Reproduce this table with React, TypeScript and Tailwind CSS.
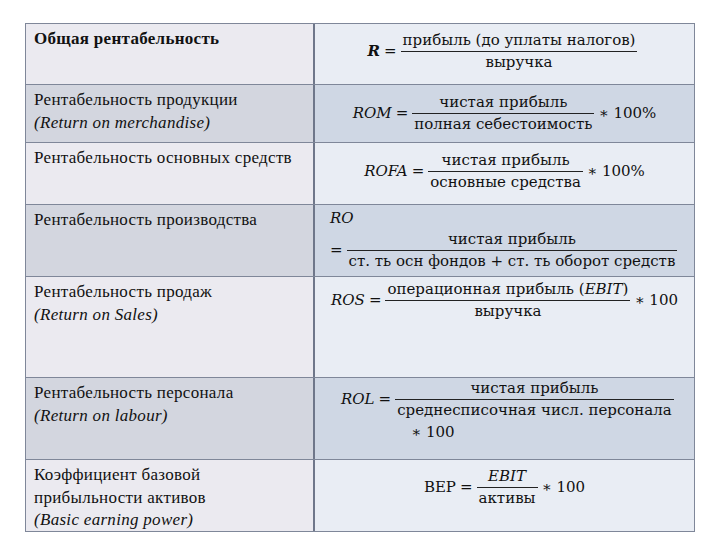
import React from "react";

function Frac({ num, den }: { num: React.ReactNode; den: React.ReactNode }) {
  return (
    <span className="mx-[4px] inline-flex flex-col items-center">
      <span className="px-[2px] leading-[21px]">{num}</span>
      <span className="h-px w-full bg-[#222]" />
      <span className="px-[2px] leading-[21px]">{den}</span>
    </span>
  );
}

function V({ children, b }: { children: React.ReactNode; b?: boolean }) {
  return <i className={b ? "font-bold" : ""}>{children}</i>;
}

function LeftCell({ children, dark, h }: { children: React.ReactNode; dark?: boolean; h: string }) {
  return (
    <div
      className={`${h} w-[289px] shrink-0 border-r-2 border-[#6f778a] px-[8px] pt-[4px] font-['Liberation_Serif',serif] text-[17px] leading-[22.5px] tracking-[0.3px] text-[#111] ${
        dark ? "bg-[#d3d6df]" : "bg-[#ebeaf0]"
      }`}
    >
      {children}
    </div>
  );
}

const mathCls = "font-['DejaVu_Serif',serif] text-[15px] text-[#111]";

export default function App() {
  const rowBorder = "border-b border-[#7f8799]";
  return (
    <div className="h-[540px] w-[720px] bg-white pl-[25px] pt-[23px]">
      <div className="w-[670px] border border-[#7f8799] text-[#111]">
        {/* Row 1 */}
        <div className={`flex ${rowBorder}`}>
          <LeftCell h="h-[60px]">
            <b>Общая рентабельность</b>
          </LeftCell>
          <div className={`flex flex-1 items-center justify-center bg-[#e9edf4] pb-[6px] ${mathCls}`}>
            <V b>R</V>
            <span className="ml-[4px]">=</span>
            <Frac num="прибыль (до уплаты налогов)" den="выручка" />
          </div>
        </div>
        {/* Row 2 */}
        <div className={`flex ${rowBorder}`}>
          <LeftCell h="h-[57px]" dark>
            Рентабельность продукции
            <br />
            <i>(Return on merchandise)</i>
          </LeftCell>
          <div className={`flex flex-1 items-center justify-center bg-[#cfd7e4] ${mathCls}`}>
            <V>ROM</V>
            <span className="ml-[4px]">=</span>
            <Frac num="чистая прибыль" den="полная себестоимость" />
            <span>∗ 100%</span>
          </div>
        </div>
        {/* Row 3 */}
        <div className={`flex ${rowBorder}`}>
          <LeftCell h="h-[61px]">Рентабельность основных средств</LeftCell>
          <div className={`flex flex-1 items-center justify-center bg-[#e9edf4] pb-[4px] ${mathCls}`}>
            <V>ROFA</V>
            <span className="ml-[4px]">=</span>
            <Frac num="чистая прибыль" den="основные средства" />
            <span>∗ 100%</span>
          </div>
        </div>
        {/* Row 4 */}
        <div className={`flex ${rowBorder}`}>
          <LeftCell h="h-[71px]" dark>
            Рентабельность производства
          </LeftCell>
          <div className={`flex-1 bg-[#cfd7e4] pl-[15px] pt-[2px] ${mathCls}`}>
            <div className="leading-[22px]">
              <V>RO</V>
            </div>
            <div className="flex items-center">
              <span>=</span>
              <Frac num="чистая прибыль" den="ст. ть осн фондов + ст. ть оборот средств" />
            </div>
          </div>
        </div>
        {/* Row 5 */}
        <div className={`flex ${rowBorder}`}>
          <LeftCell h="h-[100px]">
            Рентабельность продаж
            <br />
            <i>(Return on Sales)</i>
          </LeftCell>
          <div className={`flex flex-1 items-start justify-center bg-[#e9edf4] pt-[2px] ${mathCls}`}>
            <div className="flex items-center">
              <V>ROS</V>
              <span className="ml-[4px]">=</span>
              <Frac
                num={
                  <>
                    операционная прибыль (<V>EBIT</V>)
                  </>
                }
                den="выручка"
              />
              <span>∗ 100</span>
            </div>
          </div>
        </div>
        {/* Row 6 */}
        <div className={`flex ${rowBorder}`}>
          <LeftCell h="h-[81px]" dark>
            Рентабельность персонала
            <br />
            <i>(Return on labour)</i>
          </LeftCell>
          <div className={`flex-1 bg-[#cfd7e4] pl-[26px] ${mathCls}`}>
            <div className="flex items-center">
              <V>ROL</V>
              <span className="ml-[4px]">=</span>
              <Frac num="чистая прибыль" den="среднесписочная числ. персонала" />
            </div>
            <div className="pl-[70px] leading-[22px]">∗ 100</div>
          </div>
        </div>
        {/* Row 7 */}
        <div className="flex">
          <LeftCell h="h-[71px]">
            Коэффициент базовой
            <br />
            прибыльности активов
            <br />
            <i>(Basic earning power)</i>
          </LeftCell>
          <div className={`flex flex-1 items-start justify-center bg-[#e9edf4] pt-[6px] ${mathCls}`}>
            <div className="flex items-center">
              <span>BEP</span>
              <span className="ml-[4px]">=</span>
              <Frac num={<V>EBIT</V>} den="активы" />
              <span>∗ 100</span>
            </div>
          </div>
        </div>
      </div>
    </div>
  );
}
